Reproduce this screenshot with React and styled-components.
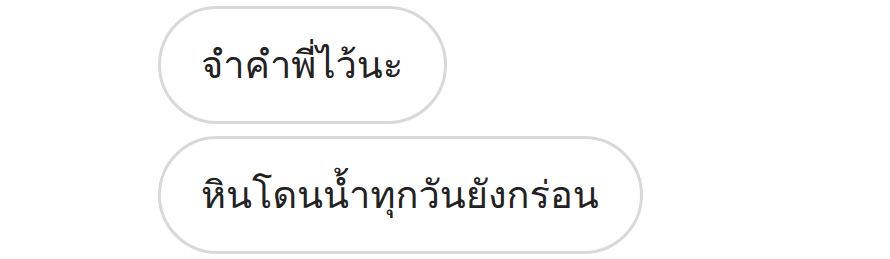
import React from "react";
import styled, { createGlobalStyle } from "styled-components";

const GlobalStyle = createGlobalStyle`
  html, body {
    margin: 0;
    padding: 0;
    background: #ffffff;
  }
  body {
    font-family: "Loma", "Garuda", "Noto Sans Thai", sans-serif;
  }
`;

const Thread = styled.ul`
  list-style: none;
  margin: 0;
  padding: 6px 0 0 158px;
  display: flex;
  flex-direction: column;
  align-items: flex-start;
  gap: 12px;
`;

const Bubble = styled.li`
  display: flex;
  align-items: center;
  box-sizing: border-box;
  height: 118px;
  padding: 0 41px 0 40px;
  border: 3px solid #d9d9d9;
  border-radius: 59px;
  background: #fff;
  color: #222;
  font-size: 38px;
  line-height: 1;
  white-space: nowrap;
`;

const messages = ["จำคำพี่ไว้นะ", "หินโดนน้ำทุกวันยังกร่อน"];

const App = () => {
  return (
    <>
      <GlobalStyle />
      <Thread>
        {messages.map((text) => (
          <Bubble key={text}>{text}</Bubble>
        ))}
      </Thread>
    </>
  );
};

export default App;
